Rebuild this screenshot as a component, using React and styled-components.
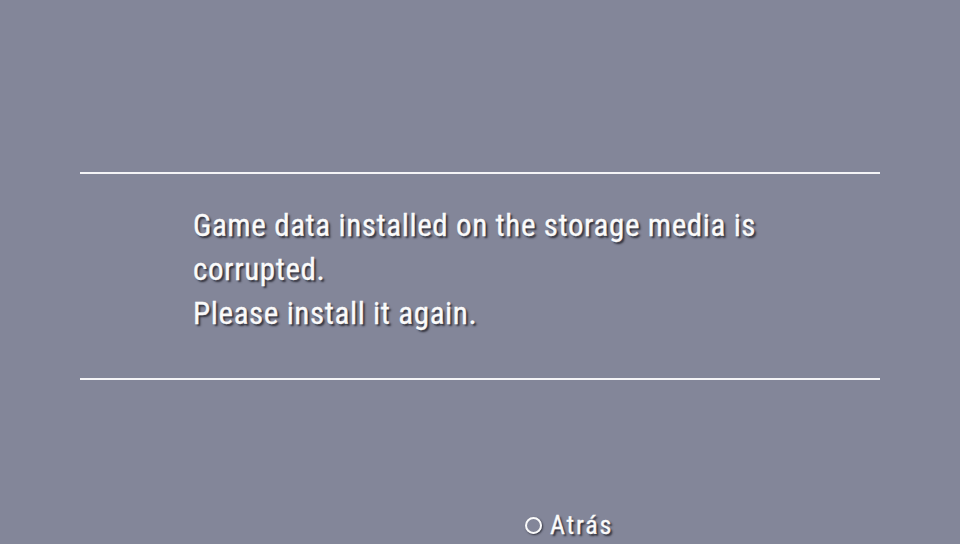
import React from 'react'
import styled, { createGlobalStyle } from 'styled-components'

const GlobalStyle = createGlobalStyle`
html, body {
  margin: 0;
  padding: 0;
  background: #838699;
}
`

function App() {
  return (
    <Screen>
      <GlobalStyle />
      <Dialog>
        <Message>
          Game data installed on the storage media is
          <br />
          corrupted.
          <br />
          Please install it again.
        </Message>
      </Dialog>
      <Footer>
        <BackButton>
          <Circle />
          Atrás
        </BackButton>
      </Footer>
    </Screen>
  )
}

const Screen = styled.div`
width: 960px;
height: 544px;
background: #838699;
display: flex;
flex-direction: column;
padding-top: 172px;
box-sizing: border-box;
overflow: hidden;
font-family: "Roboto Condensed", "DejaVu Sans Condensed", "Liberation Sans Narrow", sans-serif;
color: #fafafa;
`

const Dialog = styled.div`
margin: 0 80px;
height: 208px;
box-sizing: border-box;
border-top: 2px solid #f4f4f6;
border-bottom: 2px solid #f4f4f6;
padding: 30px 0 0 113px;
`

const Message = styled.p`
margin: 0;
font-size: 31px;
letter-spacing: 0.6px;
line-height: 44px;
-webkit-text-stroke: 0.3px #fafafa;
text-shadow: 2px 2px 2px rgba(30, 30, 40, 0.85);
`

const Footer = styled.div`
flex: 1;
display: flex;
justify-content: center;
align-items: flex-end;
padding: 0 0 1px 178px;
`

const BackButton = styled.div`
display: flex;
align-items: center;
gap: 8px;
font-size: 26px;
letter-spacing: 1.8px;
line-height: 36px;
-webkit-text-stroke: 0.3px #fafafa;
text-shadow: 2px 2px 2px rgba(30, 30, 40, 0.85);
`

const Circle = styled.span`
width: 13px;
height: 13px;
border: 2.5px solid #fafafa;
border-radius: 50%;
box-shadow: 1px 1px 2px rgba(30, 30, 40, 0.8);
`

export default App
